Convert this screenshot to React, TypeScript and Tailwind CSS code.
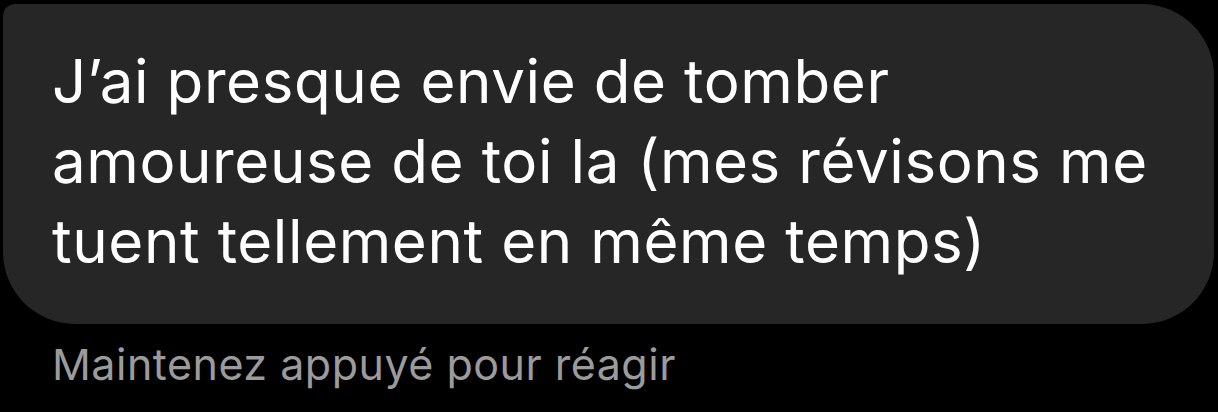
import React from 'react';

const lines = [
  'J\u2019ai presque envie de tomber',
  'amoureuse de toi la (mes révisons me',
  'tuent tellement en même temps)',
];

const App: React.FC = () => {
  return (
    <div
      className="w-[1218px] h-[412px] bg-black overflow-hidden"
      style={{ fontFamily: 'Inter, "Noto Sans", sans-serif' }}
    >
      {/* Message bubble */}
      <div className="ml-[3px] mt-[4px] w-[1211px] h-[320px] bg-[#262626] rounded-tl-[12px] rounded-tr-[72px] rounded-br-[72px] rounded-bl-[72px] pl-[49px] pt-[37px]">
        {lines.map(line => (
          <p key={line} className="text-[60px] leading-[80px] text-white whitespace-nowrap tracking-[0.6px]">
            {line}
          </p>
        ))}
      </div>

      {/* Hint */}
      <p className="pl-[52px] pt-[14px] text-[43px] leading-[52px] text-[#9b9b9b] whitespace-nowrap tracking-[0.5px]">
        Maintenez appuyé pour réagir
      </p>
    </div>
  );
};

export default App;
